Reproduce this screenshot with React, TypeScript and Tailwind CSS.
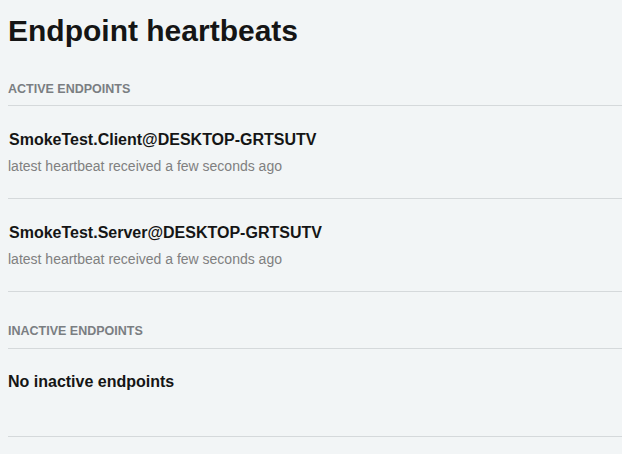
const active = [
  { name: "SmokeTest.Client@DESKTOP-GRTSUTV", seen: "a few seconds ago" },
  { name: "SmokeTest.Server@DESKTOP-GRTSUTV", seen: "a few seconds ago" },
]

export default function App() {
  return (
    <div className="min-h-[454px] bg-[#f2f5f6] pl-2 pt-[11px] font-['Liberation_Sans',Arial,sans-serif] text-[#151515]">
      <h1 className="text-[30px] font-bold leading-[40px]">Endpoint heartbeats</h1>

      <h2 className="mt-[30px] border-b border-[#d5d9db] pb-[8px] text-[12.5px] font-bold uppercase leading-[16px] text-[#7a7e82]">
        Active endpoints
      </h2>
      {active.map((ep) => (
        <div key={ep.name} className="border-b border-[#d5d9db] pb-[22px] pt-[24px]">
          <div className="pl-px text-[16px] font-bold leading-[20px]">{ep.name}</div>
          <div className="mt-[6px] text-[14px] leading-[20px] text-[#808080]">
            latest heartbeat received {ep.seen}
          </div>
        </div>
      ))}

      <h2 className="border-b border-[#d5d9db] pb-[9px] pt-[31px] text-[12.5px] font-bold uppercase leading-[16px] text-[#7a7e82]">
        Inactive endpoints
      </h2>
      <div className="border-b border-[#d5d9db] pb-[44px] pt-[23px] text-[16px] font-bold leading-[20px]">
        No inactive endpoints
      </div>
    </div>
  )
}
